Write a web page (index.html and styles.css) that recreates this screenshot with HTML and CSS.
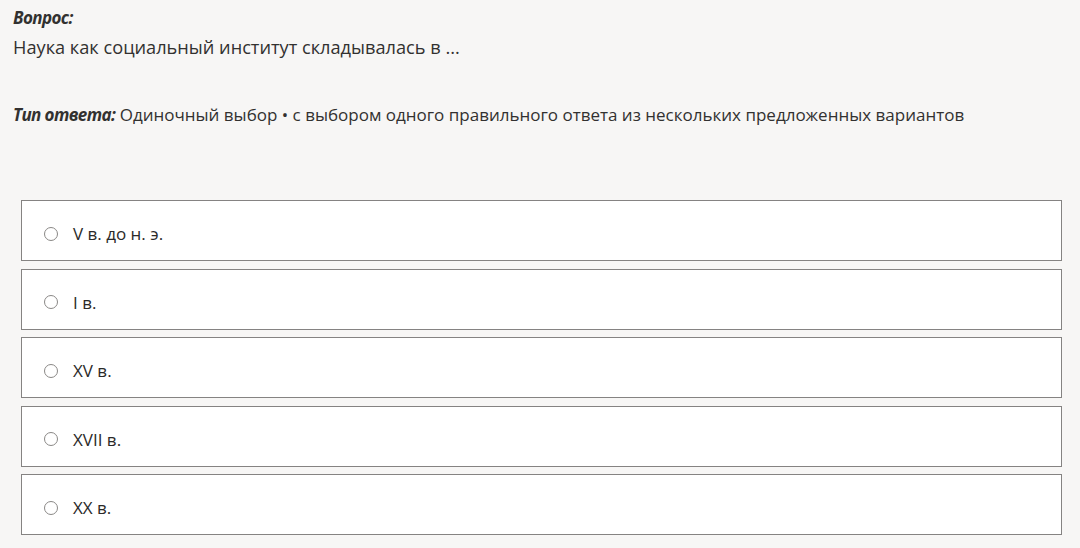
FILE: index.html
```html
<!DOCTYPE html>
<html lang="ru">
  <head>
    <meta charset="UTF-8" />
    <meta name="viewport" content="width=device-width, initial-scale=1.0" />
    <title>Вопрос</title>
    <link rel="stylesheet" href="styles.css">
  </head>
  <body>
    <div id="question">
      <div class="label">Вопрос:</div>
      <div id="questionText">Наука как социальный институт складывалась в ...</div>

      <div id="answerType">
        <span class="label">Тип ответа:</span> Одиночный выбор • с выбором одного правильного ответа из нескольких предложенных вариантов
      </div>

      <!-- варианты ответа -->
      <div id="options">
        <label class="option">
          <input type="radio" name="answer" />
          <span class="optionText">V в. до н. э.</span>
        </label>
        <label class="option">
          <input type="radio" name="answer" />
          <span class="optionText">I в.</span>
        </label>
        <label class="option">
          <input type="radio" name="answer" />
          <span class="optionText">XV в.</span>
        </label>
        <label class="option">
          <input type="radio" name="answer" />
          <span class="optionText">XVII в.</span>
        </label>
        <label class="option">
          <input type="radio" name="answer" />
          <span class="optionText">XX в.</span>
        </label>
      </div>
    </div>
  </body>
</html>
```

FILE: styles.css
```css
body {
  margin: 0;
  background-color: #f7f6f5;
  color: #323130;
  font-family: "Open Sans", "Noto Sans", Arial, sans-serif;
}

#question {
  padding: 7px 13px 0 13px;
}

.label {
  font-weight: bold;
  font-style: italic;
  font-size: 17px;
  line-height: 22px;
  letter-spacing: -0.6px;
}

#questionText {
  font-size: 18.2px;
  line-height: 24px;
  margin-top: 6px;
}

#answerType {
  margin-top: 44px;
  font-size: 17px;
  line-height: 24px;
}

#options {
  margin-top: 73px;
  margin-left: 8px;
  width: 1041px;
  display: flex;
  flex-direction: column;
  gap: 7.5px;
}

.option {
  box-sizing: border-box;
  display: flex;
  align-items: center;
  height: 61px;
  background: #fff;
  border: 1px solid #858382;
  padding: 6px 0 0 22px;
  cursor: pointer;
}

.option input {
  appearance: none;
  box-sizing: border-box;
  width: 14px;
  height: 14px;
  margin: 0 15px 0 0;
  border: 1.5px solid #8a8886;
  border-radius: 50%;
  background: #fff;
}

.optionText {
  font-size: 17px;
  color: #2b2a29;
}
```
